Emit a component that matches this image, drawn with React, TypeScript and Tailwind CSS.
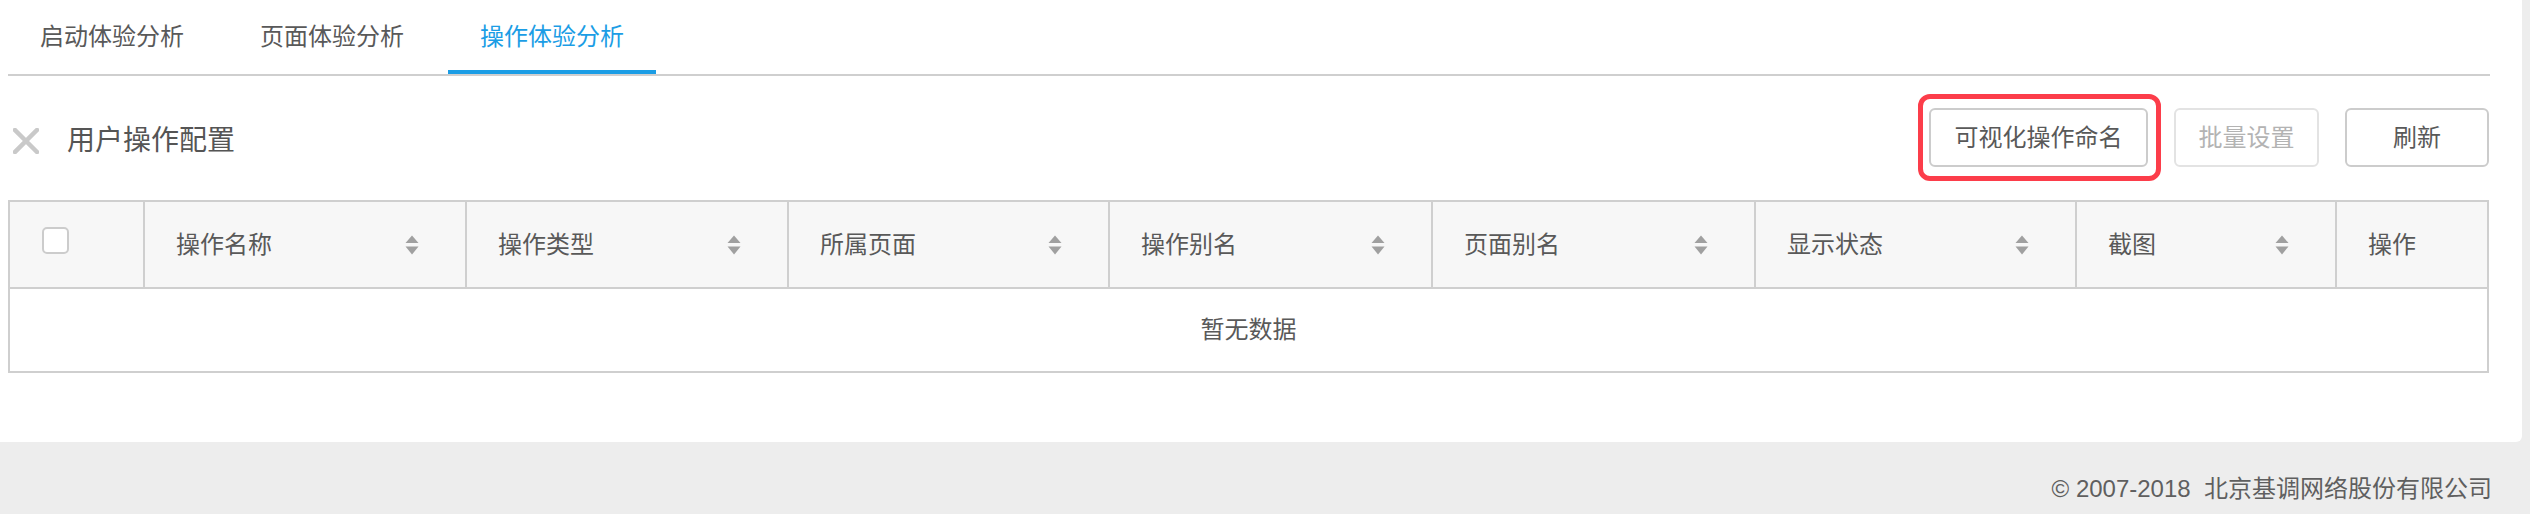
import React from "react";

const SortIcon = () => (
  <svg width="16" height="22" viewBox="0 0 16 22" className="shrink-0">
    <path d="M8 1.5 L14.5 9 L1.5 9 Z" fill="#a0a0a0" />
    <path d="M1.5 12.5 L14.5 12.5 L8 20.5 Z" fill="#a0a0a0" />
  </svg>
);

const columns = [
  { title: "操作名称", sort: true },
  { title: "操作类型", sort: true },
  { title: "所属页面", sort: true },
  { title: "操作别名", sort: true },
  { title: "页面别名", sort: true },
  { title: "显示状态", sort: true },
  { title: "截图", sort: true },
  { title: "操作", sort: false },
];

export default function App() {
  return (
    <div className="w-[2530px] h-[514px] bg-[#ededed] overflow-hidden font-['Liberation_Sans','Noto_Sans_CJK_SC',sans-serif] text-[#595959]">
      <div className="w-[2522px] h-[442px] bg-white rounded-br-[6px] pl-[8px] pr-[32px]">
        {/* Tabs */}
        <div className="flex h-[76px] border-b-2 border-[#cfcfcf]">
          {["启动体验分析", "页面体验分析", "操作体验分析"].map((t, i) => (
            <div
              key={t}
              className={
                i === 2
                  ? "flex items-center px-[32px] mr-[12px] pt-[4px] border-b-[4px] border-[#1b9de5] text-[24px] leading-none text-[#1b9de5]"
                  : "flex items-center px-[32px] mr-[12px] pt-[4px] border-b-[4px] border-transparent text-[24px] leading-none text-[#595959]"
              }
            >
              {t}
            </div>
          ))}
        </div>

        {/* Title row */}
        <div className="flex items-center justify-between mt-[32px] w-[2481px]">
          <div className="flex items-center mt-[7px] ml-[5px]">
            <svg width="26" height="26" viewBox="0 0 26 26">
              <path d="M2 2 L24 24 M24 2 L2 24" stroke="#c9c9c9" strokeWidth="4.5" strokeLinecap="square" />
            </svg>
            <span className="ml-[28px] text-[28px] leading-none text-[#555555]">用户操作配置</span>
          </div>
          <div className="flex items-center gap-[26px]">
            <div className="relative">
              <button className="w-[219px] h-[59px] border-2 border-[#cccccc] rounded-[6px] bg-white text-[24px] leading-none text-[#595959]">
                可视化操作命名
              </button>
              <div className="absolute -left-[11px] -top-[14px] -right-[13px] -bottom-[14px] border-[5px] border-[#fc3d4a] rounded-[12px]" />
            </div>
            <button className="w-[145px] h-[59px] border-2 border-[#e3e3e3] rounded-[6px] bg-white text-[24px] leading-none text-[#b3b3b3]">
              批量设置
            </button>
            <button className="w-[144px] h-[59px] border-2 border-[#cccccc] rounded-[6px] bg-white text-[24px] leading-none text-[#595959]">
              刷新
            </button>
          </div>
        </div>

        {/* Table */}
        <div className="mt-[33px] w-[2481px] border-2 border-[#cfcfcf]">
          <div className="grid grid-cols-[133px_322px_322px_321px_323px_323px_321px_260px_152px] h-[87px] bg-[#f7f7f7] border-b-2 border-[#cfcfcf]">
            <div className="flex items-center pl-[32px]">
              <div className="w-[27px] h-[27px] -mt-[8px] border-2 border-[#cccccc] rounded-[5px] bg-white" />
            </div>
            {columns.map((c) => (
              <div
                key={c.title}
                className="flex items-center justify-between border-l-2 border-[#cfcfcf] pl-[31px] pr-[45px] text-[24px] leading-none text-[#595959]"
              >
                <span>{c.title}</span>
                {c.sort ? <SortIcon /> : null}
              </div>
            ))}
          </div>
          <div className="flex items-center justify-center h-[82px] text-[24px] leading-none text-[#595959]">
            暂无数据
          </div>
        </div>
      </div>

      {/* Footer */}
      <div className="flex justify-end pr-[38px] pt-[35px] text-[24px] leading-none text-[#5f5f5f]">
        <span>©&nbsp;2007-2018&nbsp;&nbsp;北京基调网络股份有限公司</span>
      </div>
    </div>
  );
}
